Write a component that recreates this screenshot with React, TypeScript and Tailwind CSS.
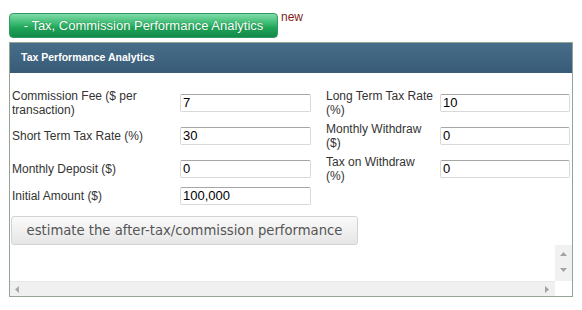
import React from "react";

function Field({ value, w }: { value: string; w: string }) {
  return (
    <input
      readOnly
      value={value}
      className={`${w} h-[18px] border border-[#d9d9d9] border-t-[#a6a6a6] rounded-[2px] px-[2px] text-[13px] leading-[16px] text-black bg-white outline-none font-['Liberation_Sans',Arial,sans-serif]`}
    />
  );
}

function Label({ children }: { children: React.ReactNode }) {
  return <div className="text-[12px] leading-[14px] text-[#333]">{children}</div>;
}

export default function App() {
  return (
    <div className="w-[582px] h-[310px] bg-white overflow-hidden font-['Liberation_Sans',Arial,sans-serif]">
      <div className="flex items-start pl-[9px] pt-[10px] h-[42px]">
        <div className="mt-[3px] h-[25px] w-[269px] rounded-[4px] border border-[#2f9a62] bg-[linear-gradient(to_bottom,#80dba8_0%,#3dbb74_40%,#1ea558_60%,#14894a_100%)] text-white text-[13px] leading-[23px] text-center [text-shadow:0_0_1px_rgba(0,60,20,0.5)]">
          - Tax, Commission Performance Analytics
        </div>
        <span className="ml-[3px] text-[12px] leading-[14px] text-[#7f1d1d]">new</span>
      </div>

      <div className="ml-[9px] w-[564px] h-[255px] border border-[#95a595] flex flex-col">
        <div className="h-[30px] shrink-0 bg-linear-to-b from-[#476d88] to-[#385c77] flex items-center pl-[11px] text-white font-bold text-[10.5px]">
          Tax Performance Analytics
        </div>

        <div className="flex-1 flex flex-col">
          <div className="pt-[13px] pl-[2px] grid grid-cols-[168px_131px_15px_114px_130px] grid-rows-[33px_33px_33px_21px] items-center">
            <Label>
              Commission Fee ($ per
              <br />
              transaction)
            </Label>
            <Field value="7" w="w-[131px]" />
            <div />
            <Label>
              Long Term Tax Rate
              <br />
              (%)
            </Label>
            <Field value="10" w="w-[130px]" />

            <Label>Short Term Tax Rate (%)</Label>
            <Field value="30" w="w-[131px]" />
            <div />
            <Label>
              Monthly Withdraw
              <br />
              ($)
            </Label>
            <Field value="0" w="w-[130px]" />

            <Label>Monthly Deposit ($)</Label>
            <Field value="0" w="w-[131px]" />
            <div />
            <Label>
              Tax on Withdraw
              <br />
              (%)
            </Label>
            <Field value="0" w="w-[130px]" />

            <Label>Initial Amount ($)</Label>
            <Field value="100,000" w="w-[131px]" />
            <div />
            <div />
            <div />
          </div>

          <div className="mt-[10px] ml-[1px] h-[29px] w-[347px] rounded-[3px] border border-[#d3d3d3] bg-linear-to-b from-[#fafafa] to-[#e6e6e6] flex items-center justify-center text-[13.2px] text-[#555] font-['DejaVu_Sans',Verdana,sans-serif]">
            estimate the after-tax/commission performance
          </div>

          <div className="flex-1 flex justify-end">
            <div className="w-[17px] h-full bg-[#f1f1f1] flex flex-col items-center pt-[7px] gap-[12px]">
              <svg width="7" height="4" viewBox="0 0 7 4">
                <path d="M0 4 L3.5 0 L7 4 Z" fill="#a3a3a3" />
              </svg>
              <svg width="7" height="4" viewBox="0 0 7 4">
                <path d="M0 0 L3.5 4 L7 0 Z" fill="#a3a3a3" />
              </svg>
            </div>
          </div>

          <div className="h-[15px] flex">
            <div className="flex-1 bg-[#f0f0f0] border-t border-[#e8e8e8] flex items-center justify-between pl-[5px] pr-[6px]">
              <svg width="4" height="7" viewBox="0 0 4 7">
                <path d="M4 0 L0 3.5 L4 7 Z" fill="#a8a8a8" />
              </svg>
              <svg width="4" height="7" viewBox="0 0 4 7">
                <path d="M0 0 L4 3.5 L0 7 Z" fill="#a3a3a3" />
              </svg>
            </div>
            <div className="w-[17px] bg-white" />
          </div>
        </div>
      </div>
    </div>
  );
}
